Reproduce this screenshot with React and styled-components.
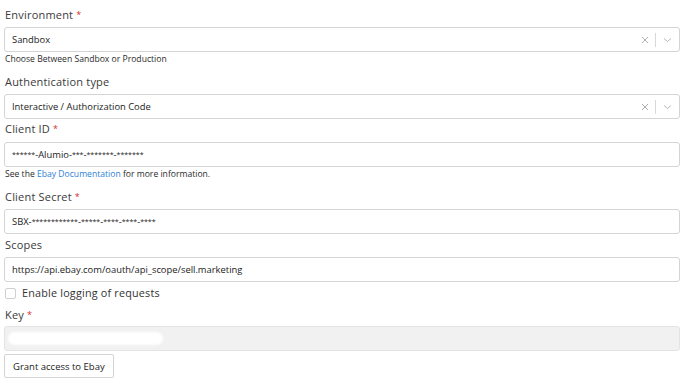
import styled, { createGlobalStyle } from 'styled-components';

const GlobalStyle = createGlobalStyle`
  body {
    margin: 0;
    background: #fff;
    font-family: "Open Sans", "DejaVu Sans", sans-serif;
    color: #333;
  }
`

const Form = styled.div`
  width: 676px;
  padding: 5px 10px 0 4px;
  display: flex;
  flex-direction: column;
`

const Label = styled.div`
  font-size: 11px;
  line-height: 14px;
  letter-spacing: 0.2px;
  color: #3a3a3a;
  margin: ${props => props.$top || 0}px 0 0 1px;
  height: 14px;
`

const Req = styled.span`
  color: #d0312d;
  margin-left: 3px;
  font-size: 9px;
  vertical-align: 1px;
`

const Box = styled.div`
  margin-top: ${props => props.$top || 0}px;
  height: 25px;
  box-sizing: border-box;
  border: 1px solid ${props => props.$disabled ? '#e4e4e4' : '#d4d4d4'};
  border-radius: 3px;
  background: ${props => props.$disabled ? '#f1f1f1' : '#fff'};
  display: flex;
  align-items: center;
  padding: 0 0 0 7px;
  font-size: 9.4px;
  color: #222;
`

const Value = styled.div`
  flex: 1;
  white-space: nowrap;
`

const Mask = styled.span`
  font-size: 7px;
  vertical-align: 1px;
`

const Indicators = styled.div`
  display: flex;
  align-items: center;
  height: 100%;
`

const Clear = styled.div`
  width: 20px;
  display: flex;
  justify-content: center;
`

const Sep = styled.div`
  width: 1px;
  height: 14px;
  background: #d8d8d8;
`

const Chevron = styled.div`
  width: 23px;
  display: flex;
  justify-content: center;
`

const Help = styled.div`
  font-size: 8.6px;
  line-height: 11px;
  margin: 2px 0 0 1px;
  color: #2a2a2a;
`

const Link = styled.a`
  color: #2f7fd5;
  text-decoration: none;
`

const CheckRow = styled.label`
  display: flex;
  align-items: center;
  gap: 6px;
  height: 12px;
  line-height: 12px;
  margin: 5px 0 0 1px;
  font-size: 10.8px;
  letter-spacing: 0.2px;
  color: #333;
`

const Check = styled.span`
  width: 11px;
  height: 11px;
  box-sizing: border-box;
  border: 1px solid #cfcfcf;
  border-radius: 2px;
  background: #fff;
`

const Blur = styled.div`
  width: 155px;
  height: 13px;
  border-radius: 7px;
  background: #fff;
  margin-left: -4px;
  filter: blur(1px);
`

const Button = styled.button`
  align-self: flex-start;
  margin-top: 3px;
  height: 24px;
  padding: 0 8px;
  font-family: inherit;
  font-size: 9.5px;
  color: #222;
  background: #fff;
  border: 1px solid #d4d4d4;
  border-radius: 2px;
`

const Select = ({ value, top }) => (
  <Box $top={top}>
    <Value>{value}</Value>
    <Indicators>
      <Clear>
        <svg width="8" height="8" viewBox="0 0 8 8">
          <path d="M1 1 L7 7 M7 1 L1 7" stroke="#b0b0b0" strokeWidth="1" />
        </svg>
      </Clear>
      <Sep />
      <Chevron>
        <svg width="9" height="6" viewBox="0 0 9 6">
          <path d="M1 1.5 L4.5 4.5 L8 1.5" stroke="#b8b8b8" strokeWidth="1" fill="none" />
        </svg>
      </Chevron>
    </Indicators>
  </Box>
)

export default function App() {
  return (
    <Form>
      <GlobalStyle />
      <Label $top={3}>Environment<Req>*</Req></Label>
      <Select top={5} value="Sandbox" />
      <Help>Choose Between Sandbox or Production</Help>
      <Label $top={10}>Authentication type</Label>
      <Select top={5} value="Interactive / Authorization Code" />
      <Label $top={3}>Client ID<Req>*</Req></Label>
      <Box $top={6}>
        <Value><Mask>******</Mask>-Alumio-<Mask>***</Mask>-<Mask>*******</Mask>-<Mask>*******</Mask></Value>
      </Box>
      <Help>See the <Link>Ebay Documentation</Link> for more information.</Help>
      <Label $top={10}>Client Secret<Req>*</Req></Label>
      <Box $top={5}>
        <Value>SBX-<Mask>************</Mask>-<Mask>*****</Mask>-<Mask>****</Mask>-<Mask>****</Mask>-<Mask>****</Mask></Value>
      </Box>
      <Label $top={4}>Scopes</Label>
      <Box $top={5}><Value>https://api.ebay.com/oauth/api_scope/sell.marketing</Value></Box>
      <CheckRow><Check />Enable logging of requests</CheckRow>
      <Label $top={9}>Key<Req>*</Req></Label>
      <Box $top={4} $disabled><Blur /></Box>
      <Button>Grant access to Ebay</Button>
    </Form>
  )
}
